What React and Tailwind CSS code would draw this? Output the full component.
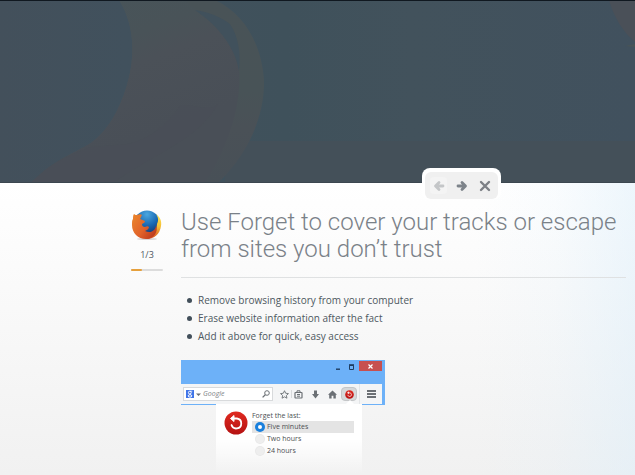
import React, { useState } from 'react';

const tips = [
  'Remove browsing history from your computer',
  'Erase website information after the fact',
  'Add it above for quick, easy access',
];

const ranges = ['Five minutes', 'Two hours', '24 hours'];

const HeaderArt = () => (
  <svg
    className="absolute inset-0 h-full w-full"
    viewBox="0 0 635 183"
    preserveAspectRatio="xMinYMin slice"
    aria-hidden="true"
  >
    <defs>
      <linearGradient id="sky" x1="0" x2="1" y1="0" y2="0">
        <stop offset="0" stopColor="#43505b" />
        <stop offset="0.2" stopColor="#41515d" />
        <stop offset="0.45" stopColor="#3f515b" />
        <stop offset="0.65" stopColor="#42525c" />
        <stop offset="1" stopColor="#41515e" />
      </linearGradient>
      <linearGradient id="tail" x1="0.35" x2="0.65" y1="0" y2="0.7">
        <stop offset="0" stopColor="#485459" />
        <stop offset="0.3" stopColor="#495358" />
        <stop offset="0.5" stopColor="#4b5158" />
        <stop offset="1" stopColor="#494f57" />
      </linearGradient>
      <linearGradient id="rim" x1="0" x2="0" y1="0" y2="1">
        <stop offset="0" stopColor="#495357" />
        <stop offset="0.5" stopColor="#485357" />
        <stop offset="0.7" stopColor="#4a5157" />
        <stop offset="1" stopColor="#485057" />
      </linearGradient>
    </defs>
    <rect width="635" height="183" fill="url(#sky)" />
    <rect y="141" x="225" width="410" height="42" fill="#445059" />
    <path
      d="M119 0C134 23 136 55 127 85C119 112 107 131 91 143C73 154 53 160 31 183H218C248 154 265 116 264 80C262 48 247 15 215 0Z"
      fill="url(#rim)"
    />
    <path
      d="M119 0C134 23 136 55 127 85C119 112 107 131 91 143C73 154 53 160 31 183H205C228 147 242 105 239 69C234 43 216 22 195 10L185 0Z"
      fill="url(#tail)"
    />
    <path d="M195 10C210 12 222 18 230 24C238 36 241 52 239 71C235 46 217 25 195 10Z" fill="#41515c" />
    <path d="M127 144C151 140 169 121 181 105C201 105 210 112 218 104C198 140 155 153 113 183H31C53 160 73 154 91 147Z" fill="#494f57" opacity="0.6" />
    <path d="M609 0C614 18 624 33 635 42V0Z" fill="#4a5058" />
    <path d="M625 46L635 44V47Z" fill="#495457" />
    <rect width="635" height="1" fill="#101820" />
    <rect y="182" width="635" height="1" fill="#3c4750" />
  </svg>
);

const FirefoxLogo = () => (
  <svg className="h-8 w-8" viewBox="0 0 32 32" role="img" aria-label="Firefox">
    <defs>
      <radialGradient id="globe" cx="0.5" cy="0.15" r="0.85">
        <stop offset="0" stopColor="#4aa7df" />
        <stop offset="0.5" stopColor="#1968b2" />
        <stop offset="1" stopColor="#112c62" />
      </radialGradient>
      <linearGradient id="fox" x1="0" x2="1" y1="0.2" y2="0.9">
        <stop offset="0" stopColor="#e9822c" />
        <stop offset="0.5" stopColor="#e1622a" />
        <stop offset="1" stopColor="#b3321c" />
      </linearGradient>
      <linearGradient id="flame" x1="0" x2="0" y1="0" y2="1">
        <stop offset="0" stopColor="#fbe75a" />
        <stop offset="0.5" stopColor="#f5bf35" />
        <stop offset="1" stopColor="#d94b20" />
      </linearGradient>
    </defs>
    <ellipse cx="16" cy="30" rx="10" ry="1" fill="#d9d5d5" />
    <circle cx="16" cy="14.5" r="13" fill="url(#globe)" />
    <path
      d="M25 5C29 8 31 12 30 17C29 25 23 30 16 30C14 29 12 27 12 25C20 28 26 22 26 15C28 11 27 8 25 5Z"
      fill="url(#flame)"
    />
    <path
      d="M3 5C4 6 5 6 6 6C8 5 10 5 11 6C10 7 10 9 9 10L14 12C14 14 12 14 11 15C11 17 12 18 14 18C16 17 17 17 18 18C18 20 16 21 14 22C20 25 25 21 25 16C28 23 22 30 15 30C7 30 1 24 1 16C1 13 1 11 2 10C2 8 2 6 3 5Z"
      fill="url(#fox)"
    />
  </svg>
);

const ForgetIcon = ({ className }) => (
  <svg className={className} viewBox="0 0 24 24" aria-hidden="true">
    <defs>
      <linearGradient id="forget" x1="0" x2="0" y1="0" y2="1">
        <stop offset="0" stopColor="#e02a20" />
        <stop offset="1" stopColor="#b51212" />
      </linearGradient>
    </defs>
    <circle cx="12" cy="12" r="11.5" fill="url(#forget)" />
    <path d="M8.5 7.5H13A5 5 0 1 1 7.5 14" fill="none" stroke="#fff" strokeWidth="1.8" strokeLinecap="round" />
    <path d="M10 4.5L6.5 7.5L10 10.5Z" fill="#fff" stroke="#fff" strokeLinejoin="round" />
  </svg>
);

const ArrowIcon = ({ flip }) => (
  <svg className={flip ? 'h-3 w-3 rotate-180' : 'h-3 w-3'} viewBox="0 0 12 12" aria-hidden="true">
    <path d="M2 6H9M6 2.5L9.5 6L6 9.5" fill="none" stroke="currentColor" strokeWidth="2.8" strokeLinecap="round" strokeLinejoin="round" />
  </svg>
);

const TourNav = ({ step, setStep }) => (
  <nav className="absolute right-[134px] -bottom-4 rounded-t-lg rounded-b-md bg-white px-[3px] pt-1">
    <div className="flex items-center gap-1.5 rounded-md bg-[#f0f0f0] p-[5px]">
      <button
        aria-label="Previous"
        disabled={step === 1}
        onClick={() => setStep(step - 1)}
        className="flex h-[17px] w-[17px] items-center justify-center rounded-sm bg-[#f4f4f4] text-[#c4c6c8]"
      >
        <ArrowIcon flip />
      </button>
      <button
        aria-label="Next"
        disabled={step === 3}
        onClick={() => setStep(step + 1)}
        className="flex h-[17px] w-[17px] items-center justify-center text-[#7d838a]"
      >
        <ArrowIcon />
      </button>
      <button aria-label="Close" className="flex h-[17px] w-[17px] items-center justify-center text-[#7d8086]">
        <svg className="h-3 w-3" viewBox="0 0 12 12" aria-hidden="true">
          <path d="M2 2L10 10M10 2L2 10" fill="none" stroke="currentColor" strokeWidth="2.4" strokeLinecap="round" />
        </svg>
      </button>
    </div>
  </nav>
);

const Toolbar = () => (
  <div className="mr-[3px] flex h-5 items-center bg-[#f4f5f6] pl-0.5 text-[#6b7075]">
    <div className="flex h-3.5 w-[90px] items-center border border-[#d8dadc] bg-white pl-0.5">
      <svg className="h-2 w-2 shrink-0" viewBox="0 0 8 8" aria-hidden="true">
        <rect width="8" height="8" fill="#3f74e8" />
        <circle cx="3.8" cy="2.6" r="1.4" fill="none" stroke="#fff" />
        <ellipse cx="4" cy="5.9" rx="1.8" ry="1.2" fill="none" stroke="#fff" />
        <path d="M4 1.2H6.3M4.6 3.6L4.2 4.7" stroke="#fff" strokeWidth="0.8" />
      </svg>
      <svg className="ml-0.5 h-[5px] w-[5px] shrink-0" viewBox="0 0 5 5" aria-hidden="true">
        <path d="M0 1.5H5L2.5 4Z" fill="#6b6f73" />
      </svg>
      <input
        aria-label="Search"
        placeholder="Google"
        className="ml-0.5 min-w-0 flex-1 text-[7px] italic leading-3 outline-none placeholder:text-[#808487]"
      />
      <svg className="mr-0.5 h-2 w-2 shrink-0" viewBox="0 0 8 8" fill="none" stroke="currentColor" aria-hidden="true">
        <circle cx="5" cy="3" r="2.3" />
        <path d="M3.3 4.7L0.6 7.4" strokeWidth="1.3" />
      </svg>
    </div>
    <div className="ml-[7px] flex flex-1 items-center">
      <svg className="h-[9px] w-[9px]" viewBox="0 0 10 10" fill="none" stroke="currentColor" aria-hidden="true">
        <path d="M5 0.8L6.3 3.6L9.4 4L7.1 6.1L7.7 9.1L5 7.6L2.3 9.1L2.9 6.1L0.6 4L3.7 3.6Z" strokeLinejoin="round" />
      </svg>
      <div className="mx-0.5 h-2 w-px bg-[#d8dadc]" />
      <svg className="h-[9px] w-[9px]" viewBox="0 0 9 9" fill="none" stroke="currentColor" aria-hidden="true">
        <rect x="1" y="2.5" width="7" height="5.5" rx="0.5" strokeWidth="1.2" />
        <path d="M3 2.5V0.8H6V2.5M3 4.5H6M3 6.2H6" />
      </svg>
      <svg className="ml-2 h-[9px] w-[9px]" viewBox="0 0 9 9" aria-hidden="true">
        <path d="M3 0.5H6V4H8L4.5 8.5L1 4H3Z" fill="currentColor" />
      </svg>
      <svg className="ml-2 h-[9px] w-[9px]" viewBox="0 0 9 9" aria-hidden="true">
        <path d="M4.5 0.5L9 4.8H7.8V8.5H5.4V5.8H3.6V8.5H1.2V4.8H0Z" fill="currentColor" />
      </svg>
      <div className="ml-1 flex h-3.5 w-4 items-center justify-center rounded-sm border border-[#c4c6c8] bg-[#d6d8d9]">
        <ForgetIcon className="h-[9px] w-[9px]" />
      </div>
      <div className="ml-0.5 flex h-5 flex-1 items-center justify-center border-l border-[#e4e6e8]">
        <svg className="h-2 w-[9px]" viewBox="0 0 9 8" aria-hidden="true">
          <path d="M0 1H9M0 4H9M0 7H9" stroke="currentColor" strokeWidth="1.8" />
        </svg>
      </div>
    </div>
  </div>
);

const ForgetPanel = () => {
  const [range, setRange] = useState(ranges[0]);

  return (
    <div className="relative -mt-px ml-[35px] flex h-[70px] w-[146px] gap-1 bg-linear-to-b from-white from-50% to-transparent px-2 pt-1.5">
      <div className="absolute right-2 -top-1 border-x-4 border-b-4 border-x-transparent border-b-white" />
      <ForgetIcon className="mt-px h-6 w-6 shrink-0" />
      <fieldset className="flex-1 text-[7px] leading-3 text-[#4c4f52]">
        <legend className="leading-[11px]">Forget the last:</legend>
        {ranges.map((item) => (
          <label
            key={item}
            className={
              item === range
                ? 'flex h-3 items-center gap-0.5 bg-[#e4e4e4] pl-1'
                : 'flex h-3 items-center gap-0.5 pl-1'
            }
          >
            <input
              type="radio"
              name="range"
              checked={item === range}
              onChange={() => setRange(item)}
              className="h-2 w-2 appearance-none rounded-full bg-[#eeeeee] ring-1 ring-[#e8e8e8] checked:border-2 checked:border-[#1a80dd] checked:bg-white checked:ring-[#1a80dd]"
            />
            <span className="ml-px">{item}</span>
          </label>
        ))}
      </fieldset>
    </div>
  );
};

const BrowserPreview = () => (
  <div className="mt-[15px] w-[204px]">
    <div className="bg-[#6db1f8] pb-px">
      <div className="flex h-6 items-start justify-end pr-[3px] pt-px text-[#1f3d60]">
        <svg className="mr-1 mt-0.5 h-2 w-5" viewBox="0 0 20 8" aria-hidden="true">
          <path d="M1 6.2H5" stroke="currentColor" strokeWidth="1.4" />
          <path d="M14.5 2.5H18.5V6.5H14.5Z" fill="none" stroke="currentColor" />
          <path d="M14 2H19" stroke="currentColor" strokeWidth="1.6" />
        </svg>
        <div className="flex h-2.5 w-[23px] items-center justify-center bg-[#c75050]">
          <svg className="h-[5px] w-[5px]" viewBox="0 0 5 5" aria-hidden="true">
            <path d="M0.5 0.5L4.5 4.5M4.5 0.5L0.5 4.5" stroke="#fff" strokeWidth="1.2" />
          </svg>
        </div>
      </div>
      <Toolbar />
    </div>
    <ForgetPanel />
  </div>
);

const App = () => {
  const [step, setStep] = useState(1);

  return (
    <div className="flex h-screen flex-col overflow-hidden bg-white font-['Open_Sans',sans-serif]">
      <header className="relative z-10 h-[183px] shrink-0">
        <HeaderArt />
        <TourNav step={step} setStep={setStep} />
      </header>

      <main className="relative flex min-h-0 flex-1 items-start gap-[18px] bg-linear-to-b from-white to-[#f1f1f1] pl-[131px] pr-[9px] pt-[26px]">
        <div className="pointer-events-none absolute inset-y-0 right-0 w-40 bg-linear-to-r from-transparent via-[#dceefa]/15 to-[#dceefa]/50" />
        <div className="flex w-8 shrink-0 flex-col items-center">
          <FirefoxLogo />
          <span className="mt-1.5 text-[9px] leading-4 text-[#4d5760]">{step}/3</span>
          <div className="mt-1.5 h-0.5 w-full rounded-full bg-[#dcdcdc]">
            <div className="h-0.5 rounded-full bg-[#e6a03c]" style={{ width: `${(step / 3) * 100}%` }} />
          </div>
        </div>

        <section className="relative flex-1">
          <h1 className="border-b border-[#dfe1e2] pb-3.5 font-[Roboto,sans-serif] text-[24px] font-light leading-[27px] text-[#7a8188]">
            Use Forget to cover your tracks or escape from sites you don’t trust
          </h1>
          <ul className="mt-[13px] text-[10px] font-medium leading-[18px] text-[#4d5760]">
            {tips.map((tip) => (
              <li key={tip} className="flex items-center gap-1.5 pl-1.5">
                <span className="h-[5px] w-[5px] rounded-full bg-[#424f5a]" />
                {tip}
              </li>
            ))}
          </ul>
          <BrowserPreview />
        </section>
      </main>
    </div>
  );
};

export default App;
